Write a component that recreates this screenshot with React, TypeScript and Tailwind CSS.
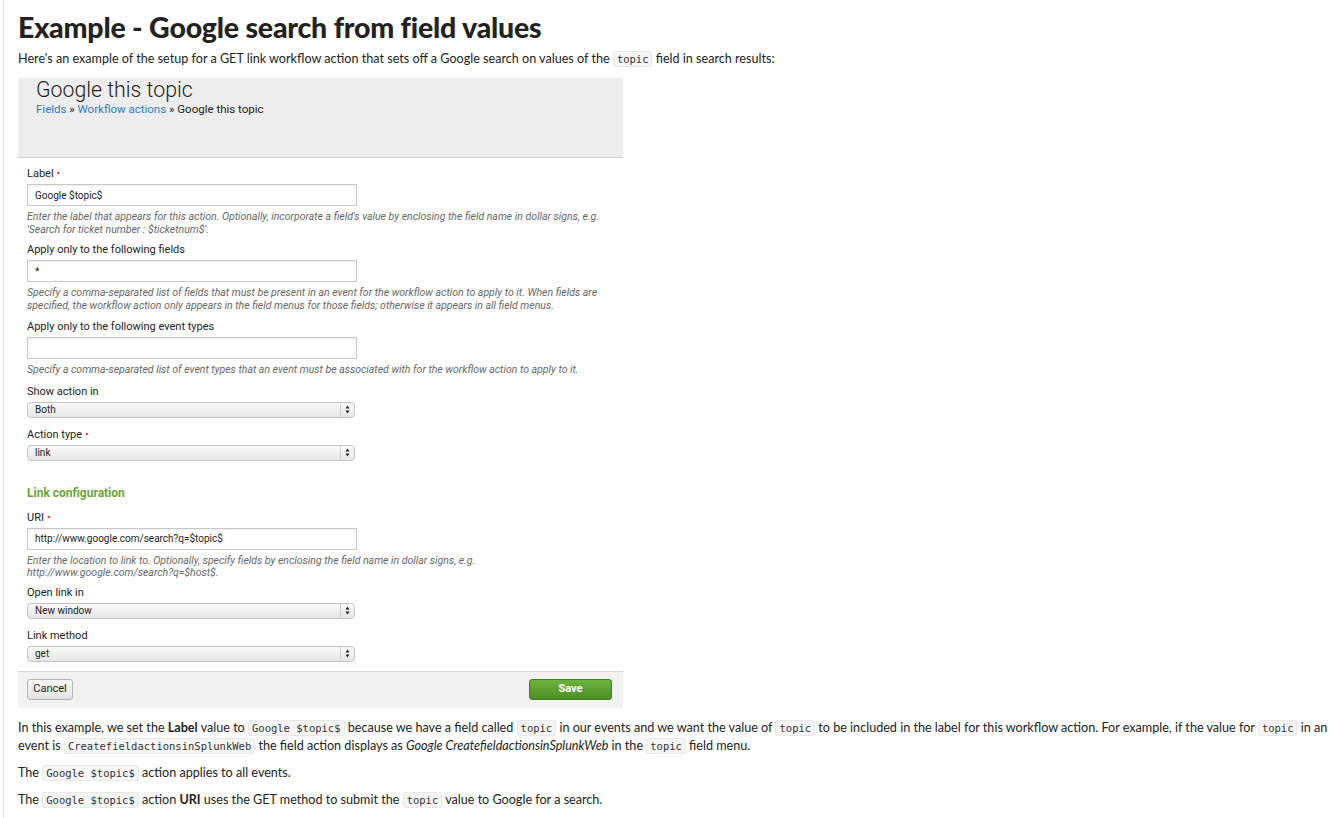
import { ReactNode } from 'react';

function Code({ children }: { children: ReactNode }) {
  return (
    <code className="rounded-[3px] border border-[#e8e8e8] bg-[#f5f5f5] px-[3px] py-[1px] font-['DejaVu_Sans_Mono',monospace] text-[10.5px] text-[#333]">
      {children}
    </code>
  );
}

function Req() {
  return <span className="ml-[3px] text-[#d6343c]">•</span>;
}

function TextField({ value }: { value: string }) {
  return (
    <div className="flex h-[22px] w-[330px] items-center border border-[#c8c8c8] bg-white px-[7px] text-[10px] text-[#222] shadow-[inset_0_1px_2px_rgba(0,0,0,0.08)]">
      {value}
    </div>
  );
}

function Select({ value }: { value: string }) {
  return (
    <div className="flex h-[16px] w-[328px] items-center rounded-[4px] border border-[#c4c4c4] bg-gradient-to-b from-[#fafafa] to-[#e6e6e6] pl-[7px] text-[10px] text-[#222]">
      <span className="flex-1">{value}</span>
      <span className="flex h-full w-[14px] items-center justify-center border-l border-[#d0d0d0]">
        <svg width="5" height="9" viewBox="0 0 5 9">
          <path d="M2.5 0.5 L4.5 3.5 L0.5 3.5 Z M2.5 8.5 L4.5 5.5 L0.5 5.5 Z" fill="#222" />
        </svg>
      </span>
    </div>
  );
}

function Help({ children }: { children: ReactNode }) {
  return <p className="mt-[5px] text-[10.5px] italic leading-[12.5px] text-[#666]">{children}</p>;
}

function Label({ children }: { children: ReactNode }) {
  return <div className="mb-[3px] text-[11px] leading-[14px] text-[#222]">{children}</div>;
}

export default function App() {
  return (
    <div className="min-h-[818px] w-[1334px] bg-white font-['Lato',sans-serif] text-[#222]">
      <div className="ml-[3px] min-h-[818px] border-l border-[#e6e6e6] pl-[14px] pt-[10px]">
        <h1 className="text-[28.5px] font-black leading-[34px] tracking-[-0.2px] text-[#222]">
          Example - Google search from field values
        </h1>
        <p className="mt-[6px] text-[12.6px] leading-[18px]">
          Here's an example of the setup for a GET link workflow action that sets off a Google search on values of the{' '}
          <Code>topic</Code> field in search results:
        </p>

        <div className="mt-[10px] w-[605px] font-['Roboto',sans-serif]">
          <div className="h-[80px] border-b border-[#cfcfcf] bg-[#ededed] pl-[18px]">
            <div className="text-[21.3px] font-light leading-[23px] text-[#222]">Google this topic</div>
            <div className="text-[11.5px] leading-[16px] text-[#222]">
              <span className="text-[#2f7bbf]">Fields</span> » <span className="text-[#2f7bbf]">Workflow actions</span> » Google this topic
            </div>
          </div>

          <div className="px-[9px] pt-[9px]">
            <Label>Label<Req /></Label>
            <TextField value="Google $topic$" />
            <Help>
              Enter the label that appears for this action. Optionally, incorporate a field's value by enclosing the field name in dollar signs, e.g.
              <br />
              'Search for ticket number : $ticketnum$'.
            </Help>

            <div className="mt-[7px]">
              <Label>Apply only to the following fields</Label>
              <TextField value="*" />
              <Help>
                Specify a comma-separated list of fields that must be present in an event for the workflow action to apply to it. When fields are
                <br />
                specified, the workflow action only appears in the field menus for those fields; otherwise it appears in all field menus.
              </Help>
            </div>

            <div className="mt-[8px]">
              <Label>Apply only to the following event types</Label>
              <TextField value="" />
              <Help>Specify a comma-separated list of event types that an event must be associated with for the workflow action to apply to it.</Help>
            </div>

            <div className="mt-[8px]">
              <Label>Show action in</Label>
              <Select value="Both" />
            </div>

            <div className="mt-[10px]">
              <Label>Action type<Req /></Label>
              <Select value="link" />
            </div>

            <div className="mt-[24px] text-[12px] font-bold leading-[16px] text-[#65a637]">Link configuration</div>

            <div className="mt-[10px]">
              <Label>URI<Req /></Label>
              <TextField value="http://www.google.com/search?q=$topic$" />
              <Help>
                Enter the location to link to. Optionally, specify fields by enclosing the field name in dollar signs, e.g.
                <br />
                http://www.google.com/search?q=$host$.
              </Help>
            </div>

            <div className="mt-[6px]">
              <Label>Open link in</Label>
              <Select value="New window" />
            </div>

            <div className="mt-[10px]">
              <Label>Link method</Label>
              <Select value="get" />
            </div>
          </div>

          <div className="mt-[9px] flex h-[37px] items-center justify-between border-t border-[#d6d6d6] bg-[#f2f2f2] pl-[9px] pr-[11px]">
            <div className="flex h-[21px] w-[46px] items-center justify-center rounded-[3px] border border-[#b5b5b5] bg-gradient-to-b from-[#fafafa] to-[#e2e2e2] text-[11px] text-[#222]">
              Cancel
            </div>
            <div className="flex h-[21px] w-[83px] items-center justify-center rounded-[3px] border border-[#3f7d1f] bg-gradient-to-b from-[#6db33f] to-[#4c8f25] text-[11px] font-bold text-white">
              Save
            </div>
          </div>
        </div>

        <p className="mt-[11px] text-[12.6px] leading-[18px]">
          In this example, we set the <b>Label</b> value to <Code>Google $topic$</Code> because we have a field called <Code>topic</Code> in our events and we want the value of <Code>topic</Code> to be included in the label for this workflow action. For example, if the value for <Code>topic</Code> in an event is <Code>CreatefieldactionsinSplunkWeb</Code> the field action displays as <i>Google CreatefieldactionsinSplunkWeb</i> in the <Code>topic</Code> field menu.
        </p>
        <p className="mt-[9px] text-[12.6px] leading-[18px]">
          The <Code>Google $topic$</Code> action applies to all events.
        </p>
        <p className="mt-[9px] text-[12.6px] leading-[18px]">
          The <Code>Google $topic$</Code> action <b>URI</b> uses the GET method to submit the <Code>topic</Code> value to Google for a search.
        </p>
      </div>
    </div>
  );
}
